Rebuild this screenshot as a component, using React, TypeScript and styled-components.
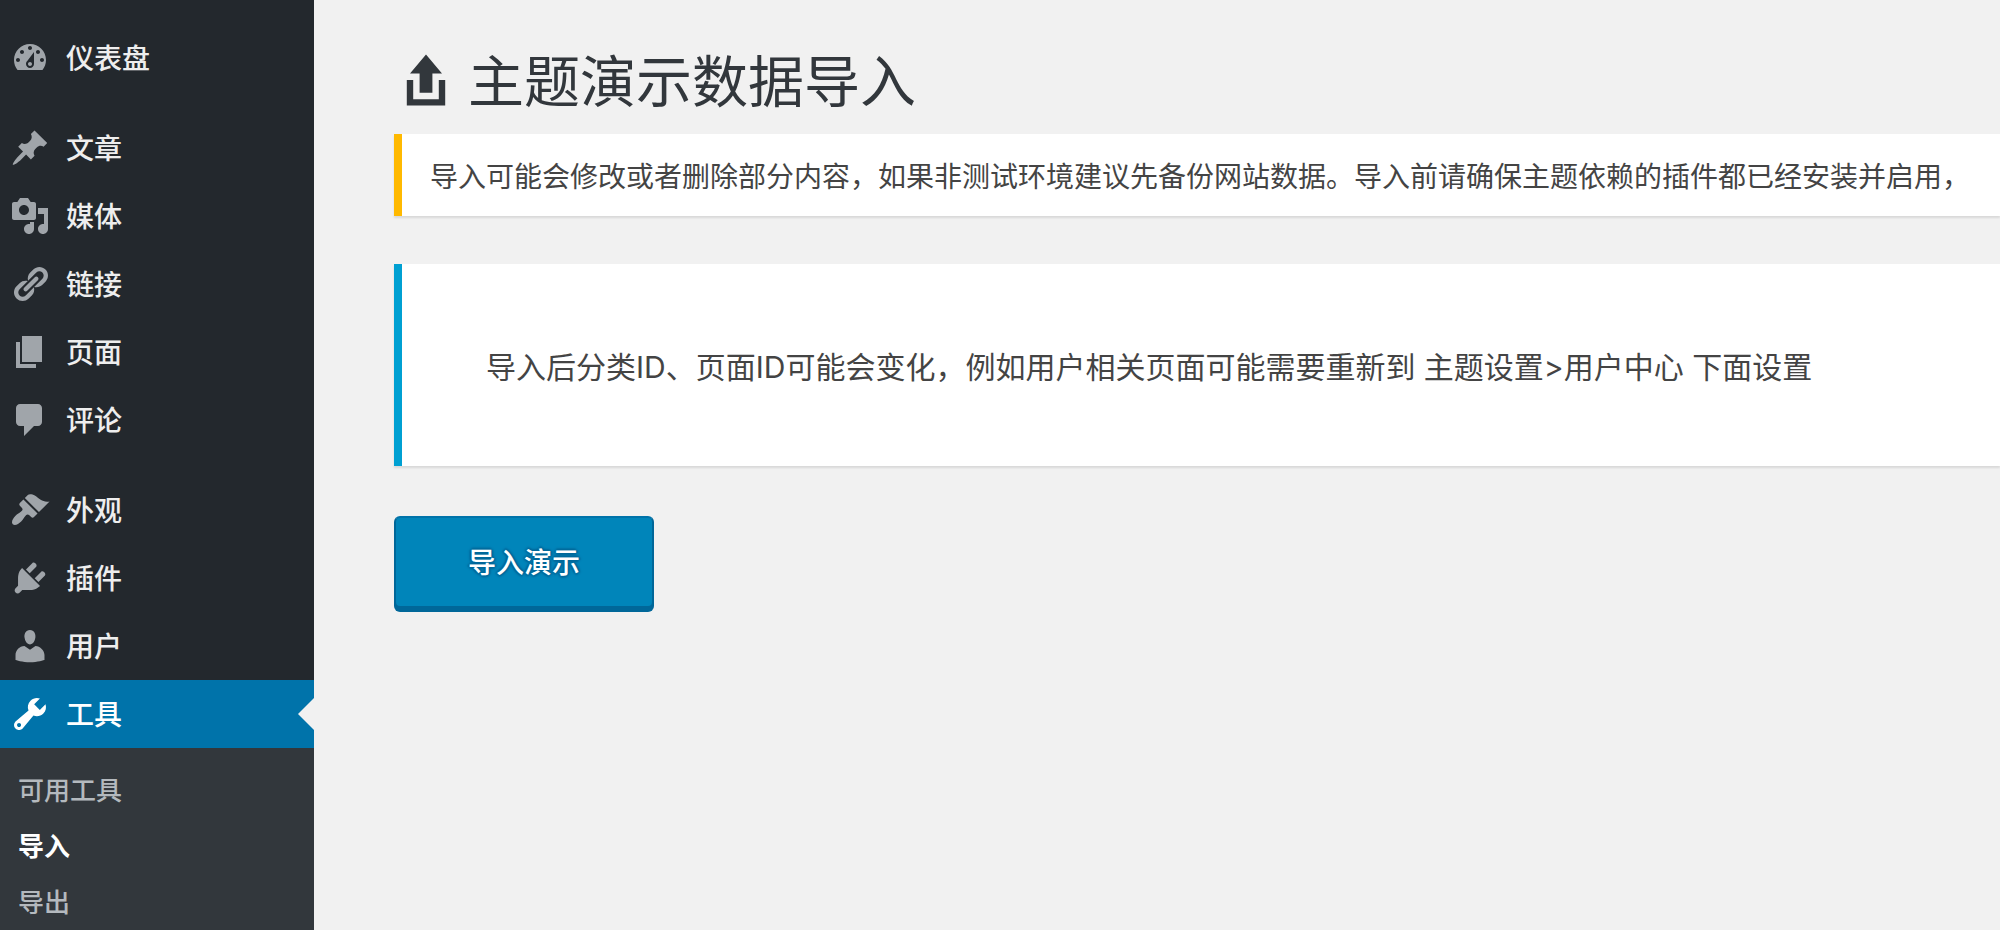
import React from "react";
import styled, { createGlobalStyle } from "styled-components";

const GlobalStyle = createGlobalStyle`
  *, *::before, *::after { box-sizing: border-box; }
  body {
    margin: 0;
    background: #f1f1f1;
    color: #444;
    font-family: Inter, "Noto Sans CJK SC", sans-serif;
    font-size: 28px;
    line-height: 42px;
  }
`;

const Page = styled.div`
  display: flex;
  align-items: stretch;
  min-height: 100vh;
`;

const Sidebar = styled.nav`
  flex: none;
  width: 314px;
  background: #23282d;
`;

const Menu = styled.ul`
  margin: 0;
  padding: 24px 0 0;
  list-style: none;
`;

const MenuEntry = styled.li<{ $spaced?: boolean }>`
  margin-top: ${({ $spaced }) => ($spaced ? "22px" : "0")};
`;

const MenuLink = styled.a<{ $current?: boolean }>`
  position: relative;
  display: flex;
  align-items: center;
  gap: 16px;
  height: 68px;
  padding-left: 10px;
  color: ${({ $current }) => ($current ? "#fff" : "#eee")};
  background: ${({ $current }) => ($current ? "#0073aa" : "transparent")};
  font-weight: 500;
  text-decoration: none;

  svg {
    color: ${({ $current }) => ($current ? "#fff" : "#a0a5aa")};
  }
`;

const MenuLabel = styled.span`
  padding-top: 2px;
`;

const CurrentArrow = styled.span`
  position: absolute;
  top: 18px;
  right: 0;
  border: 16px solid transparent;
  border-left-width: 0;
  border-right-color: #f1f1f1;
`;

const Submenu = styled.ul`
  margin: 0;
  padding: 14px 0 0;
  list-style: none;
  background: #32373c;
`;

const SubmenuLink = styled.a<{ $current?: boolean }>`
  display: block;
  padding: 2px 18px 0;
  color: ${({ $current }) => ($current ? "#fff" : "#b4b9be")};
  font-size: 26px;
  line-height: 54px;
  font-weight: ${({ $current }) => ($current ? 700 : 500)};
  text-decoration: none;
`;

const Glyph = styled.svg<{ $size: number }>`
  flex: none;
  display: block;
  width: ${({ $size }) => $size}px;
  height: ${({ $size }) => $size}px;
  fill: currentColor;
`;

const Main = styled.main`
  flex: 1;
  min-width: 0;
  padding: 48px 0 48px 80px;
`;

const Title = styled.h1`
  display: flex;
  align-items: center;
  gap: 10px;
  margin: 0 0 22px;
  color: #32373c;
  font-size: 56px;
  line-height: 60px;
  font-weight: 400;
`;

const TitleText = styled.span`
  padding-top: 4px;
`;

const Notices = styled.section`
  display: grid;
  gap: 48px;
  margin-bottom: 50px;
`;

const Notice = styled.div<{ $accent: string; $roomy?: boolean }>`
  padding: ${({ $roomy }) => ($roomy ? "82px 84px 78px" : "22px 28px 18px")};
  border-left: 8px solid ${({ $accent }) => $accent};
  background: #fff;
  box-shadow: 0 2px 2px rgba(0, 0, 0, 0.1);
  font-size: ${({ $roomy }) => ($roomy ? "30px" : "28px")};

  p { margin: 0; }
`;

const PrimaryButton = styled.button`
  display: block;
  height: 92px;
  padding: 2px 72px 0;
  border: 2px solid #006799;
  border-top-color: #0073aa;
  border-radius: 6px;
  background: #0085ba;
  box-shadow: 0 4px 0 #006799;
  color: #fff;
  font: inherit;
  font-weight: 500;
  text-shadow: 0 -2px 2px #006799, 2px 0 2px #006799, 0 2px 2px #006799, -2px 0 2px #006799;
  cursor: pointer;
`;

const paths = {
  dashboard:
    "M3.76 16h12.48c1.1-1.37 1.76-3.11 1.76-5 0-4.42-3.58-8-8-8s-8 3.58-8 8c0 1.89.66 3.63 1.76 5zM10 4c.55 0 1 .45 1 1s-.45 1-1 1-1-.45-1-1 .45-1 1-1zM6 6c.55 0 1 .45 1 1s-.45 1-1 1-1-.45-1-1 .45-1 1-1zm8 0c.55 0 1 .45 1 1s-.45 1-1 1-1-.45-1-1 .45-1 1-1zm-5.37 5.55L12 7v6c0 1.1-.9 2-2 2s-2-.9-2-2c0-.57.24-1.08.63-1.45zM4 10c.55 0 1 .45 1 1s-.45 1-1 1-1-.45-1-1 .45-1 1-1zm12 0c.55 0 1 .45 1 1s-.45 1-1 1-1-.45-1-1 .45-1 1-1zm-5 3c0-.55-.45-1-1-1s-1 .45-1 1 .45 1 1 1 1-.45 1-1z",
  pin: "M10.44 3.02l1.82-1.82 6.36 6.35-1.83 1.82c-1.05-.68-2.48-.57-3.41.36l-.75.75c-.92.93-1.04 2.35-.35 3.41l-1.83 1.82-2.41-2.41-2.8 2.79c-.42.42-3.38 2.71-3.8 2.29s1.86-3.39 2.28-3.81l2.79-2.79L4.1 9.36l1.83-1.82c1.05.69 2.48.57 3.4-.36l.75-.75c.93-.92 1.05-2.35.36-3.41z",
  media:
    "M13 11V4c0-.55-.45-1-1-1h-1.67L9 1H5L3.67 3H2c-.55 0-1 .45-1 1v7c0 .55.45 1 1 1h10c.55 0 1-.45 1-1zM7 4.5c1.38 0 2.5 1.12 2.5 2.5S8.38 9.5 7 9.5 4.5 8.38 4.5 7 5.62 4.5 7 4.5zM14 6h5v10.5c0 1.38-1.12 2.5-2.5 2.5S14 17.88 14 16.5s1.12-2.5 2.5-2.5c.17 0 .34.02.5.05V9h-3V6zm-4 8.05V13h2v3.5c0 1.38-1.12 2.5-2.5 2.5S7 17.88 7 16.5 8.12 14 9.5 14c.17 0 .34.02.5.05z",
  link: "M17.74 2.76c1.68 1.69 1.68 4.41 0 6.1l-1.53 1.52c-1.12 1.12-2.7 1.47-4.14 1.09l2.62-2.61.76-.77.76-.76c.84-.84.84-2.2 0-3.04-.84-.85-2.2-.85-3.04 0l-.77.76-3.38 3.38c-.37-1.44-.02-3.02 1.1-4.14l1.52-1.53c1.69-1.68 4.42-1.68 6.1 0zM8.59 13.43l5.34-5.34c.42-.42.42-1.1 0-1.52-.44-.43-1.13-.39-1.53 0l-5.33 5.34c-.42.42-.42 1.1 0 1.52.44.43 1.13.39 1.52 0zm-.76 2.29l4.14-4.15c.38 1.44.03 3.02-1.09 4.14l-1.52 1.53c-1.69 1.68-4.41 1.68-6.1 0-1.68-1.68-1.68-4.42 0-6.1l1.53-1.52c1.12-1.12 2.7-1.47 4.14-1.1l-4.14 4.15c-.85.84-.85 2.2 0 3.05.84.84 2.2.84 3.04 0z",
  page: "M6 15V2h10v13H6zm-1 1h8v2H3V5h2v11z",
  comment: "M5 2h9c1.1 0 2 .9 2 2v7c0 1.1-.9 2-2 2h-2l-5 5v-5H5c-1.1 0-2-.9-2-2V4c0-1.1.9-2 2-2z",
  brush:
    "M14.48 11.06L7.41 3.99l1.5-1.5c.5-.56 2.3-.47 3.51.32 1.21.8 1.43 1.28 2.91 2.1 1.18.64 2.45 1.26 4.45.85zm-.71.71L6.7 4.7 4.93 6.47c-.39.39-.39 1.02 0 1.41l1.06 1.06c.39.39.39 1.03 0 1.42-.6.6-1.43 1.11-2.21 1.69-.35.26-.7.53-1.01.84C1.43 14.23.4 16.08 1.4 17.07c.99 1 2.84-.03 4.18-1.36.31-.31.58-.66.85-1.02.57-.78 1.08-1.61 1.69-2.21.39-.39 1.02-.39 1.41 0l1.06 1.06c.39.39 1.02.39 1.41 0z",
  plug: "M13.11 4.36L9.87 7.6 8 5.73l3.24-3.24c.35-.34 1.05-.2 1.56.32.52.51.66 1.21.31 1.55zm-8 1.77l.91-1.12 9.01 9.01-1.19.84c-.71.71-2.63 1.16-3.82 1.16H6.14L4.9 17.26c-.59.59-1.54.59-2.12 0-.59-.58-.59-1.53 0-2.12l1.24-1.24v-3.88c0-1.13.4-3.19 1.09-3.89zm7.26 3.97l3.24-3.24c.34-.35 1.04-.21 1.55.31.52.51.66 1.21.31 1.55l-3.24 3.25z",
  user: "M10 9.25c-2.27 0-2.73-3.44-2.73-3.44C7 4.02 7.82 2 9.97 2c2.16 0 2.98 2.02 2.71 3.81 0 0-.41 3.44-2.68 3.44zm0 2.57L12.72 10c2.39 0 4.52 2.33 4.52 4.53v2.49s-3.65 1.13-7.24 1.13c-3.65 0-7.24-1.13-7.24-1.13v-2.49c0-2.25 1.94-4.48 4.47-4.48z",
  wrench:
    "M16.68 9.77c-1.34 1.34-3.3 1.67-4.95.99l-5.41 6.52c-.99.99-2.59.99-3.58 0s-.99-2.59 0-3.57l6.52-5.42c-.68-1.65-.35-3.61.99-4.95 1.28-1.28 3.12-1.62 4.72-1.06l-2.89 2.89 2.82 2.82 2.86-2.87c.53 1.58.18 3.39-1.08 4.65zM3.81 16.21c.4.39 1.04.39 1.43 0 .4-.4.4-1.04 0-1.43-.39-.4-1.03-.4-1.43 0-.39.39-.39 1.03 0 1.43z",
  upload: "M8 14V8H5l5-6 5 6h-3v6H8zM4 10h2v6h8v-6h2v8H4z",
};

type IconName = keyof typeof paths;

function Icon({ name, size = 40 }: { name: IconName; size?: number }) {
  return (
    <Glyph $size={size} viewBox="0 0 20 20" aria-hidden="true">
      <path d={paths[name]} />
    </Glyph>
  );
}

interface Item {
  label: string;
  icon: IconName;
  spaced?: boolean;
  current?: boolean;
  children?: { label: string; current?: boolean }[];
}

const items: Item[] = [
  { label: "仪表盘", icon: "dashboard" },
  { label: "文章", icon: "pin", spaced: true },
  { label: "媒体", icon: "media" },
  { label: "链接", icon: "link" },
  { label: "页面", icon: "page" },
  { label: "评论", icon: "comment" },
  { label: "外观", icon: "brush", spaced: true },
  { label: "插件", icon: "plug" },
  { label: "用户", icon: "user" },
  {
    label: "工具",
    icon: "wrench",
    current: true,
    children: [{ label: "可用工具" }, { label: "导入", current: true }, { label: "导出" }],
  },
];

export default function App() {
  return (
    <>
      <GlobalStyle />
      <Page lang="zh-CN">
        <Sidebar>
          <Menu>
            {items.map((item) => (
              <MenuEntry key={item.label} $spaced={item.spaced}>
                <MenuLink href="#" $current={item.current}>
                  <Icon name={item.icon} />
                  <MenuLabel>{item.label}</MenuLabel>
                  {item.current && <CurrentArrow />}
                </MenuLink>
                {item.children && (
                  <Submenu>
                    {item.children.map((child) => (
                      <li key={child.label}>
                        <SubmenuLink href="#" $current={child.current}>
                          {child.label}
                        </SubmenuLink>
                      </li>
                    ))}
                  </Submenu>
                )}
              </MenuEntry>
            ))}
          </Menu>
        </Sidebar>
        <Main>
          <Title>
            <Icon name="upload" size={64} />
            <TitleText>主题演示数据导入</TitleText>
          </Title>
          <Notices>
            <Notice $accent="#ffb900">
              <p>导入可能会修改或者删除部分内容，如果非测试环境建议先备份网站数据。导入前请确保主题依赖的插件都已经安装并启用，</p>
            </Notice>
            <Notice $accent="#00a0d2" $roomy>
              <p>导入后分类ID、页面ID可能会变化，例如用户相关页面可能需要重新到 主题设置&gt;用户中心 下面设置</p>
            </Notice>
          </Notices>
          <PrimaryButton type="button">导入演示</PrimaryButton>
        </Main>
      </Page>
    </>
  );
}
